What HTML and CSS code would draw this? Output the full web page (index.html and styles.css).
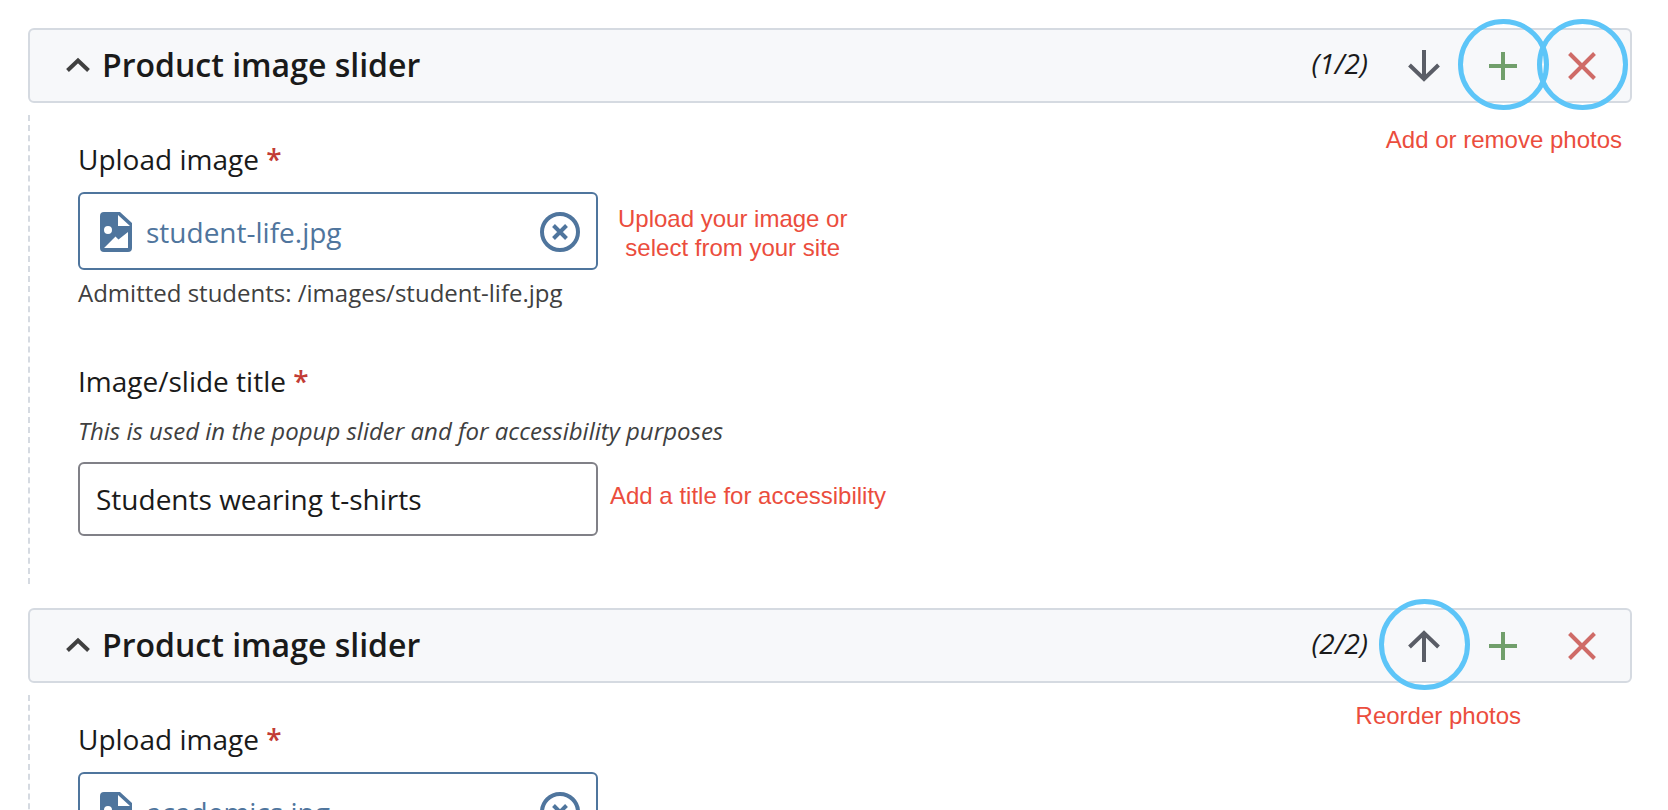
FILE: index.html
```html
<!DOCTYPE html>
<html lang="en">
<head>
    <meta charset="UTF-8">
    <meta name="viewport" content="width=device-width, initial-scale=1.0">
    <title>Product image slider</title>
    <link rel="stylesheet" href="styles.css">
</head>
<body>
    <!-- Shared icons -->
    <svg class="sprite" aria-hidden="true">
        <symbol id="icon-chevron" viewBox="0 0 24 16">
            <path d="M1.500 13.500L12 3.500L22.500 13.500" fill="none" stroke="currentColor" stroke-width="4"/>
        </symbol>
        <symbol id="icon-down" viewBox="0 0 32 32">
            <path d="M16 0V29M1.500 15L16 29L30.500 15" fill="none" stroke="currentColor" stroke-width="4"/>
        </symbol>
        <symbol id="icon-up" viewBox="0 0 32 32">
            <path d="M16 32V3M1.500 17L16 3L30.500 17" fill="none" stroke="currentColor" stroke-width="4"/>
        </symbol>
        <symbol id="icon-plus" viewBox="0 0 32 32">
            <path d="M16 2V30M2 16H30" fill="none" stroke="currentColor" stroke-width="4"/>
        </symbol>
        <symbol id="icon-cross" viewBox="0 0 32 32">
            <path d="M3.500 3.500L28.500 28.500M28.500 3.500L3.500 28.500" fill="none" stroke="currentColor" stroke-width="4"/>
        </symbol>
        <symbol id="icon-file" viewBox="0 0 32 40">
            <path fill="currentColor" fill-rule="evenodd" d="M4 0H20L32 11V36Q32 40 28 40H4Q0 40 0 36V4Q0 0 4 0ZM18 3V14H30ZM8 14A4 4 0 1 0 8 22A4 4 0 1 0 8 14ZM4 36H28V20L18.500 27.500L15.500 24.500Z"/>
        </symbol>
        <symbol id="icon-clear" viewBox="0 0 40 40">
            <circle cx="20" cy="20" r="18" fill="none" stroke="currentColor" stroke-width="4"/>
            <path d="M13.500 13.500L26.500 26.500M26.500 13.500L13.500 26.500" fill="none" stroke="currentColor" stroke-width="4"/>
        </symbol>
    </svg>

    <main class="page">
        <section class="item">
            <header class="item-header">
                <h2 class="item-title">
                    <button class="toggle" type="button" aria-expanded="true">
                        <svg class="chevron"><use href="#icon-chevron"/></svg>
                        Product image slider
                    </button>
                </h2>
                <div class="actions">
                    <span class="count">(1/2)</span>
                    <button class="action move" type="button" aria-label="Move down"><svg><use href="#icon-down"/></svg></button>
                    <button class="action add marked" type="button" aria-label="Add"><svg><use href="#icon-plus"/></svg></button>
                    <button class="action remove marked" type="button" aria-label="Remove"><svg><use href="#icon-cross"/></svg></button>
                </div>
                <p class="note note-remove">Add or remove photos</p>
            </header>
            <div class="item-body">
                <div class="field">
                    <label class="label" for="image-1">Upload image <span class="required">*</span></label>
                    <div class="field-row">
                        <div class="chooser">
                            <button class="file" id="image-1" type="button"><svg><use href="#icon-file"/></svg>student-life.jpg</button>
                            <button class="clear" type="button" aria-label="Clear"><svg><use href="#icon-clear"/></svg></button>
                        </div>
                        <p class="note note-upload">Upload your image or<br>select from your site</p>
                    </div>
                    <p class="path">Admitted students: /images/student-life.jpg</p>
                </div>
                <div class="field">
                    <label class="label" for="title-1">Image/slide title <span class="required">*</span></label>
                    <p class="help" id="help-1">This is used in the popup slider and for accessibility purposes</p>
                    <div class="field-row">
                        <input class="text-input" id="title-1" type="text" value="Students wearing t-shirts" aria-describedby="help-1">
                        <p class="note note-title">Add a title for accessibility</p>
                    </div>
                </div>
            </div>
        </section>

        <section class="item">
            <header class="item-header">
                <h2 class="item-title">
                    <button class="toggle" type="button" aria-expanded="true">
                        <svg class="chevron"><use href="#icon-chevron"/></svg>
                        Product image slider
                    </button>
                </h2>
                <div class="actions">
                    <span class="count">(2/2)</span>
                    <button class="action move marked" type="button" aria-label="Move up"><svg><use href="#icon-up"/></svg></button>
                    <button class="action add" type="button" aria-label="Add"><svg><use href="#icon-plus"/></svg></button>
                    <button class="action remove" type="button" aria-label="Remove"><svg><use href="#icon-cross"/></svg></button>
                </div>
                <p class="note note-reorder">Reorder photos</p>
            </header>
            <div class="item-body">
                <div class="field">
                    <label class="label" for="image-2">Upload image <span class="required">*</span></label>
                    <div class="field-row">
                        <div class="chooser">
                            <button class="file" id="image-2" type="button"><svg><use href="#icon-file"/></svg>academics.jpg</button>
                            <button class="clear" type="button" aria-label="Clear"><svg><use href="#icon-clear"/></svg></button>
                        </div>
                    </div>
                </div>
            </div>
        </section>
    </main>
</body>
</html>
```

FILE: styles.css
```css
*,
*::after {
    box-sizing: border-box;
}

body {
    margin: 0;
    font-family: "Open Sans", sans-serif;
    font-size: 28px;
    line-height: 38px;
    color: #1a1a1a;
    background-color: #fff;
}

h2, p {
    margin: 0;
}

button {
    padding: 0;
    border: none;
    background: none;
    font: inherit;
    color: inherit;
    cursor: pointer;
}

.sprite {
    display: none;
}

.page {
    height: 100vh;
    padding: 28px 36px 0 28px;
    overflow: hidden;
}

/* Header bar */
.item-header {
    position: relative;
    display: flex;
    align-items: center;
    justify-content: space-between;
    height: 75px;
    padding: 0 9px 0 36px;
    background-color: #f7f8fa;
    border: 2px solid #d5dae1;
    border-radius: 6px;
}

.item-title {
    padding-bottom: 2px;
    font-size: 32px;
    font-weight: 600;
    line-height: 44px;
}

.toggle {
    display: flex;
    align-items: center;
    gap: 12px;
}

.chevron {
    width: 24px;
    height: 16px;
    color: #404040;
}

.actions {
    display: flex;
    align-items: center;
}

.count {
    margin-right: 16px;
    padding-bottom: 6px;
    font-style: italic;
}

.action {
    position: relative;
    display: flex;
    align-items: center;
    justify-content: center;
    width: 79px;
    height: 71px;
}

.action svg {
    width: 32px;
    height: 32px;
}

.move {
    color: #5a5d66;
}

.add {
    color: #719f6b;
}

.remove {
    color: #cf6b67;
}

/* Highlight ring round a button */
.marked::after {
    content: "";
    position: absolute;
    top: -11px;
    left: -5px;
    width: 91px;
    height: 91px;
    border: 5px solid #5dc5f8;
    border-radius: 50%;
}

/* Red notes */
.note {
    font-family: "Liberation Sans", Arial, sans-serif;
    font-size: 24px;
    line-height: 29px;
    color: #eb4d3d;
    white-space: nowrap;
}

.note-remove,
.note-reorder {
    position: absolute;
}

.note-remove {
    top: 95px;
    right: 8px;
}

.note-reorder {
    top: 91px;
    right: 109px;
}

.note-upload {
    margin-left: 20px;
    padding-top: 4px;
    text-align: center;
}

.note-title {
    margin-left: 12px;
    padding-bottom: 8px;
}

/* Item content */
.item-body {
    margin: 12px 0 24px;
    padding: 25px 0 48px 48px;
    border-left: 2px dashed #d5dae1;
}

.field + .field {
    margin-top: 53px;
}

.label {
    display: block;
    margin-bottom: 14px;
}

.required {
    font-weight: 600;
    color: #c23c35;
}

.field-row {
    display: flex;
    align-items: center;
}

.chooser {
    display: flex;
    align-items: center;
    justify-content: space-between;
    width: 520px;
    height: 78px;
    padding: 2px 16px 0 20px;
    color: #4f759d;
    border: 2px solid #4f759d;
    border-radius: 6px;
}

.file {
    display: flex;
    align-items: center;
    gap: 14px;
}

.file svg {
    width: 32px;
    height: 40px;
}

.clear,
.clear svg {
    display: block;
    width: 40px;
    height: 40px;
}

.path,
.help {
    font-size: 24px;
    line-height: 32px;
    color: #404040;
}

.path {
    margin-top: 7px;
}

.help {
    margin: 15px 0;
    font-style: italic;
}

.text-input {
    width: 520px;
    height: 74px;
    padding: 0 16px;
    font: inherit;
    color: inherit;
    background-color: #fff;
    border: 2px solid #808087;
    border-radius: 6px;
}
```
